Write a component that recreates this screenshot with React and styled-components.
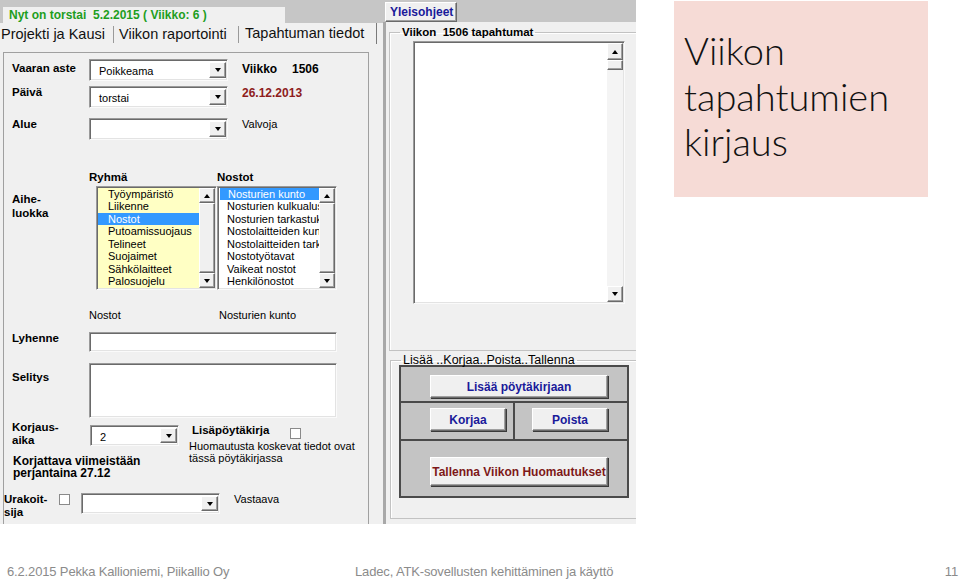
import React from 'react';
import styled, { createGlobalStyle, css } from 'styled-components';

const GlobalStyle = createGlobalStyle`
  html, body {
    margin: 0;
    padding: 0;
    background: #fff;
  }
  body {
    width: 960px;
    height: 579px;
    overflow: hidden;
    font-family: "Liberation Sans", Arial, sans-serif;
  }
`;

const sunken = css`
    border: 1px solid;
    border-color: #9a9a9a #fafafa #fafafa #9a9a9a;
    box-shadow: inset 1px 1px 0 #6a6a6a, inset -1px -1px 0 #e3e3e3;
`;

const raised = css`
    border: 1px solid;
    border-color: #ffffff #6a6a6a #6a6a6a #ffffff;
    box-shadow: inset -1px -1px 0 #a0a0a0;
`;

const Slide = styled.div`
    width: 960px;
    height: 579px;
    display: flex;
    flex-direction: column;
`;

const TopArea = styled.div`
    display: flex;
    align-items: flex-start;
    height: 540px;
`;

const Shot = styled.div`
    width: 636px;
    height: 524px;
    display: flex;
    overflow: hidden;
    font-size: 11px;
    color: #000;
`;

const LeftCol = styled.div`
    width: 383px;
    display: flex;
    flex-direction: column;
`;

const RightCol = styled.div`
    width: 253px;
    display: flex;
    flex-direction: column;
    overflow: hidden;
`;

const GrayBar = styled.div`
    height: ${p => p.$h}px;
    flex-shrink: 0;
    background: #c6c6c6;
    display: flex;
    align-items: flex-start;
`;

const StatusBox = styled.div`
    margin: 7px 0 0 3px;
    width: 282px;
    height: 16px;
    background: #f0f0f0;
    color: #1e9e1e;
    font-weight: bold;
    font-size: 12px;
    line-height: 16px;
    padding-left: 6px;
    box-sizing: border-box;
    white-space: pre;
`;

const TabsRow = styled.div`
    height: 21px;
    flex-shrink: 0;
    background: #f0f0f0;
    display: flex;
    align-items: stretch;
`;

const Tab = styled.div`
    width: ${p => p.$w}px;
    padding-left: ${p => p.$pl}px;
    box-sizing: border-box;
    font-size: 14.5px;
    color: #111;
    white-space: nowrap;
    border-right: 1px solid ${p => (p.$active ? '#7a7a7a' : '#9a9a9a')};
    margin: ${p => (p.$active ? '0' : '3px 0 1px 0')};
    line-height: ${p => (p.$active ? 21 : 17)}px;
`;

const LeftPanel = styled.div`
    flex: 1;
    background: #f0f0f0;
    padding: 8px 14px 0 3px;
    display: flex;
`;

const Frame = styled.div`
    flex: 1;
    border: 1px solid #a0a0a0;
    border-bottom: none;
    padding-left: 8px;
    display: flex;
    flex-direction: column;
`;

const Row = styled.div`
    display: flex;
    align-items: flex-start;
    flex-shrink: 0;
    height: ${p => p.$h}px;
    margin-top: ${p => p.$mt}px;
    margin-left: ${p => p.$ml || 0}px;
`;

const Label = styled.div`
    width: ${p => p.$w || 77}px;
    flex-shrink: 0;
    font-weight: bold;
    font-size: 11.5px;
    line-height: ${p => p.$lh || 13}px;
    padding-top: ${p => p.$pt || 0}px;
    white-space: pre;
`;

const Info = styled.div`
    margin-left: ${p => p.$ml || 0}px;
    width: ${p => (p.$w ? `${p.$w}px` : 'auto')};
    padding-top: ${p => p.$pt || 0}px;
    font-weight: ${p => (p.$bold ? 'bold' : 'normal')};
    font-size: ${p => (p.$bold ? 12 : 11)}px;
    line-height: 13px;
    color: ${p => p.$color || '#000'};
    white-space: pre;
`;

const ComboBox = styled.div`
    ${sunken};
    box-sizing: border-box;
    width: ${p => p.$w}px;
    height: ${p => p.$h || 22}px;
    margin-top: ${p => p.$mt || 0}px;
    margin-left: ${p => p.$ml || 0}px;
    flex-shrink: 0;
    background: #fff;
    display: flex;
    align-items: stretch;
    padding: 2px 1px 2px 9px;
`;

const ComboText = styled.div`
    flex: 1;
    font-size: 11px;
    line-height: 16px;
    padding-top: 1px;
`;

const DropBtn = styled.div`
    ${raised};
    width: 17px;
    box-sizing: border-box;
    background: #f0f0f0;
    display: flex;
    align-items: center;
    justify-content: center;
`;

const Triangle = styled.span`
    width: 0;
    height: 0;
    border-left: 3.5px solid transparent;
    border-right: 3.5px solid transparent;
    ${p => (p.$up ? 'border-bottom: 4px solid #000;' : 'border-top: 4px solid #000;')}
`;

const TextBox = styled.div`
    ${sunken};
    box-sizing: border-box;
    background: #fff;
    width: ${p => p.$w}px;
    height: ${p => p.$h}px;
`;

const ListBox = styled.div`
    ${sunken};
    box-sizing: border-box;
    width: ${p => p.$w}px;
    height: ${p => p.$h}px;
    margin-left: ${p => p.$ml || 0}px;
    background: ${p => p.$bg};
    display: flex;
    padding: 1px;
    flex-shrink: 0;
`;

const Items = styled.div`
    flex: 1;
    overflow: hidden;
    white-space: nowrap;
`;

const Item = styled.div`
    height: 12.45px;
    line-height: 12.45px;
    font-size: 11px;
    padding-left: ${p => p.$pl}px;
    margin-left: ${p => p.$ml || 0}px;
    background: ${p => (p.$sel ? '#3399ff' : 'transparent')};
    color: ${p => (p.$sel ? '#fff' : '#000')};
`;

const Scrollbar = styled.div`
    width: 16px;
    display: flex;
    flex-direction: column;
    flex-shrink: 0;
    background: #f4f4f4;
`;

const ScrollBtn = styled.div`
    ${raised};
    box-sizing: border-box;
    height: ${p => p.$h || 16}px;
    background: #f0f0f0;
    display: flex;
    align-items: center;
    justify-content: center;
    flex-shrink: 0;
`;

const Thumb = styled.div`
    ${raised};
    box-sizing: border-box;
    background: #f0f0f0;
    height: ${p => (p.$h ? `${p.$h}px` : 'auto')};
    flex: ${p => (p.$h ? 'none' : 1)};
`;

const Track = styled.div`
    flex: 1;
`;

const CheckBox = styled.div`
    width: 11px;
    height: 11px;
    box-sizing: border-box;
    border: 1px solid #8a8a8a;
    background: #fff;
    margin-top: ${p => p.$mt || 0}px;
    flex-shrink: 0;
`;

const KorjBlock = styled.div`
    display: flex;
    margin-top: 3px;
    flex-shrink: 0;
`;

const KorjLeft = styled.div`
    width: 177px;
    display: flex;
    flex-direction: column;
`;

const KorjRight = styled.div`
    display: flex;
    flex-direction: column;
`;

const Deadline = styled.div`
    margin: 8px 0 0 1px;
    font-weight: bold;
    font-size: 12px;
    line-height: 12px;
    white-space: pre;
`;

const Note = styled.div`
    margin-top: 3px;
    font-size: 11px;
    line-height: 12px;
    white-space: pre;
`;

const HelpBtn = styled.div`
    ${raised};
    box-sizing: border-box;
    margin: 2px 0 0 2px;
    width: 72px;
    height: 20px;
    background: #f0f0f0;
    color: #1a1a9a;
    font-weight: bold;
    font-size: 12px;
    line-height: 18px;
    padding-left: 4px;
`;

const RightBody = styled.div`
    flex: 1;
    background: #f0f0f0;
    border-left: 3px solid #a8a8a8;
    display: flex;
    flex-direction: column;
`;

const Group = styled.fieldset`
    margin: ${p => p.$mt}px 0 0 ${p => p.$ml}px;
    padding: 0;
    width: 270px;
    box-sizing: border-box;
    border: 1px solid #c2c2c2;
    box-shadow: inset 1px 1px 0 #fff;
    min-width: 0;
    flex-shrink: 0;
`;

const Legend = styled.legend`
    margin-left: 10px;
    padding: 0 2px;
    font-size: ${p => (p.$bold ? 11.5 : 12.5)}px;
    font-weight: ${p => (p.$bold ? 'bold' : 'normal')};
    line-height: ${p => p.$lh}px;
    white-space: pre;
`;

const EventList = styled.div`
    ${sunken};
    box-sizing: border-box;
    margin: 2px 0 46px 23px;
    width: 212px;
    height: 263px;
    background: #fff;
    display: flex;
    justify-content: flex-end;
    padding: 1px;
`;

const ActionBox = styled.div`
    margin: 0 0 20px 8px;
    width: 230px;
    height: 133px;
    box-sizing: border-box;
    border: 2px solid #4a4a4a;
    background: #c4c4c4;
    display: flex;
    flex-direction: column;
`;

const ActionRow = styled.div`
    height: ${p => p.$h}px;
    flex-shrink: 0;
    display: flex;
    border-bottom: ${p => (p.$last ? 'none' : '2px solid #4a4a4a')};
`;

const ActionCell = styled.div`
    box-sizing: border-box;
    width: ${p => (p.$w ? `${p.$w}px` : 'auto')};
    flex: ${p => (p.$w ? 'none' : 1)};
    padding: ${p => p.$pt}px 0 0 ${p => p.$pl}px;
    border-right: ${p => (p.$split ? '2px solid #4a4a4a' : 'none')};
`;

const FormButton = styled.div`
    ${raised};
    box-sizing: border-box;
    width: ${p => p.$w}px;
    height: ${p => p.$h}px;
    background: #f0f0f0;
    box-shadow: inset -1px -1px 0 #a0a0a0, 1px 1px 0 #3a3a3a;
    color: ${p => p.$color};
    font-weight: bold;
    font-size: 12px;
    display: flex;
    align-items: center;
    justify-content: center;
`;

const TitleCard = styled.div`
    margin: 1px 0 0 38px;
    width: 254px;
    height: 196px;
    box-sizing: border-box;
    background: #f6dbd6;
    padding: 27px 0 0 10px;
    font-family: Lato, "Open Sans", sans-serif;
    font-weight: 300;
    font-size: 38px;
    line-height: 45.5px;
    color: #111;
`;

const Footer = styled.div`
    height: 39px;
    display: flex;
    align-items: center;
    padding: 23px 2px 0 7px;
    box-sizing: border-box;
    font-family: "Liberation Sans", Arial, sans-serif;
    font-size: 13px;
    letter-spacing: -0.15px;
    color: #8b8b8b;
`;

const FootLeft = styled.div`
    width: 348px;
    white-space: nowrap;
`;

const FootMid = styled.div`
    flex: 1;
    white-space: nowrap;
`;

function Combo({ w, h, mt, ml, value }) {
    return (
        <ComboBox $w={w} $h={h} $mt={mt} $ml={ml}>
            <ComboText>{value}</ComboText>
            <DropBtn>
                <Triangle />
            </DropBtn>
        </ComboBox>
    );
}

function List({ items, sel, bg, w, ml, pl, selMl }) {
    return (
        <ListBox $w={w} $h={104} $bg={bg} $ml={ml}>
            <Items>
                {items.map(t => (
                    <Item key={t} $sel={t === sel} $pl={pl} $ml={t === sel ? selMl : 0}>
                        {t}
                    </Item>
                ))}
            </Items>
            <Scrollbar>
                <ScrollBtn $h={15}>
                    <Triangle $up />
                </ScrollBtn>
                <Thumb />
                <ScrollBtn $h={15}>
                    <Triangle />
                </ScrollBtn>
            </Scrollbar>
        </ListBox>
    );
}

const groups = [
    'Työympäristö',
    'Liikenne',
    'Nostot',
    'Putoamissuojaus',
    'Telineet',
    'Suojaimet',
    'Sähkölaitteet',
    'Palosuojelu',
];

const lifts = [
    'Nosturien kunto',
    'Nosturien kulkualustat',
    'Nosturien tarkastukset',
    'Nostolaitteiden kunto',
    'Nostolaitteiden tarkastukset',
    'Nostotyötavat',
    'Vaikeat nostot',
    'Henkilönostot',
];

export default function App() {
    return (
        <Slide>
            <GlobalStyle />
            <TopArea>
                <Shot>
                    <LeftCol>
                        <GrayBar $h={23}>
                            <StatusBox>{'Nyt on torstai  5.2.2015 ( Viikko: 6 )'}</StatusBox>
                        </GrayBar>
                        <TabsRow>
                            <Tab $w={114} $pl={1}>Projekti ja Kausi</Tab>
                            <Tab $w={125} $pl={5}>Viikon raportointi</Tab>
                            <Tab $w={138} $pl={6} $active>Tapahtuman tiedot</Tab>
                        </TabsRow>
                        <LeftPanel>
                            <Frame>
                                <Row $h={22} $mt={6}>
                                    <Label $pt={3}>Vaaran aste</Label>
                                    <Combo w={139} value="Poikkeama" />
                                    <Info $ml={14} $pt={4} $bold $w={50}>Viikko</Info>
                                    <Info $pt={4} $bold>1506</Info>
                                </Row>
                                <Row $h={22} $mt={5}>
                                    <Label>Päivä</Label>
                                    <Combo w={139} value="torstai" />
                                    <Info $ml={14} $pt={1} $bold $color="#8e1c1c">26.12.2013</Info>
                                </Row>
                                <Row $h={22} $mt={10}>
                                    <Label>Alue</Label>
                                    <Combo w={139} value="" />
                                    <Info $ml={14}>Valvoja</Info>
                                </Row>
                                <Row $h={13} $mt={31}>
                                    <Label />
                                    <Label $w={128}>Ryhmä</Label>
                                    <Label>Nostot</Label>
                                </Row>
                                <Row $h={104} $mt={2}>
                                    <Label $pt={6} $lh={14}>{'Aihe-\nluokka'}</Label>
                                    <List items={groups} sel="Nostot" bg="#ffffc4" w={121} ml={7} pl={10} />
                                    <List items={lifts} sel="Nosturien kunto" bg="#fff" w={120} pl={8} selMl={1} />
                                </Row>
                                <Row $h={13} $mt={19}>
                                    <Label />
                                    <Info $w={130}>Nostot</Info>
                                    <Info>Nosturien kunto</Info>
                                </Row>
                                <Row $h={20} $mt={10}>
                                    <Label>Lyhenne</Label>
                                    <TextBox $w={248} $h={20} />
                                </Row>
                                <Row $h={55} $mt={11}>
                                    <Label $pt={8}>Selitys</Label>
                                    <TextBox $w={248} $h={55} />
                                </Row>
                                <KorjBlock>
                                    <KorjLeft>
                                        <Row $h={26} $mt={0}>
                                            <Label $w={78}>{'Korjaus-\naika'}</Label>
                                            <Combo w={89} h={21} mt={4} value="2" />
                                        </Row>
                                        <Deadline>{'Korjattava viimeistään\nperjantaina 27.12'}</Deadline>
                                    </KorjLeft>
                                    <KorjRight>
                                        <Row $h={13} $mt={3} $ml={3}>
                                            <Label $w={98} $lh={13}>Lisäpöytäkirja</Label>
                                            <CheckBox $mt={4} />
                                        </Row>
                                        <Note>{'Huomautusta koskevat tiedot ovat\ntässä pöytäkirjassa'}</Note>
                                    </KorjRight>
                                </KorjBlock>
                                <Row $h={26} $mt={14} $ml={-8}>
                                    <Label $w={55}>{'Urakoit-\nsija'}</Label>
                                    <CheckBox $mt={1} />
                                    <Combo w={139} h={21} ml={11} value="" />
                                    <Info $ml={14}>Vastaava</Info>
                                </Row>
                            </Frame>
                        </LeftPanel>
                    </LeftCol>
                    <RightCol>
                        <GrayBar $h={22}>
                            <HelpBtn>Yleisohjeet</HelpBtn>
                        </GrayBar>
                        <RightBody>
                            <Group $mt={4} $ml={3}>
                                <Legend $bold $lh={13}>{'Viikon  1506 tapahtumat'}</Legend>
                                <EventList>
                                    <Scrollbar>
                                        <ScrollBtn $h={17}>
                                            <Triangle $up />
                                        </ScrollBtn>
                                        <Thumb $h={10} />
                                        <Track />
                                        <ScrollBtn $h={16}>
                                            <Triangle />
                                        </ScrollBtn>
                                    </Scrollbar>
                                </EventList>
                            </Group>
                            <Group $mt={4} $ml={4}>
                                <Legend $lh={10}>Lisää ..Korjaa..Poista..Tallenna</Legend>
                                <ActionBox>
                                    <ActionRow $h={34}>
                                        <ActionCell $pt={8} $pl={29}>
                                            <FormButton $w={178} $h={23} $color="#1a1a9a">Lisää pöytäkirjaan</FormButton>
                                        </ActionCell>
                                    </ActionRow>
                                    <ActionRow $h={36}>
                                        <ActionCell $w={114} $pt={5} $pl={29} $split>
                                            <FormButton $w={76} $h={23} $color="#1a1a9a">Korjaa</FormButton>
                                        </ActionCell>
                                        <ActionCell $pt={5} $pl={17}>
                                            <FormButton $w={76} $h={23} $color="#1a1a9a">Poista</FormButton>
                                        </ActionCell>
                                    </ActionRow>
                                    <ActionRow $h={59} $last>
                                        <ActionCell $pt={16} $pl={29}>
                                            <FormButton $w={178} $h={29} $color="#7d1818">Tallenna Viikon Huomautukset</FormButton>
                                        </ActionCell>
                                    </ActionRow>
                                </ActionBox>
                            </Group>
                        </RightBody>
                    </RightCol>
                </Shot>
                <TitleCard>
                    Viikon
                    <br />
                    tapahtumien
                    <br />
                    kirjaus
                </TitleCard>
            </TopArea>
            <Footer>
                <FootLeft>6.2.2015 Pekka Kallioniemi, Piikallio Oy</FootLeft>
                <FootMid>Ladec, ATK-sovellusten kehittäminen ja käyttö</FootMid>
                <div>11</div>
            </Footer>
        </Slide>
    );
}
